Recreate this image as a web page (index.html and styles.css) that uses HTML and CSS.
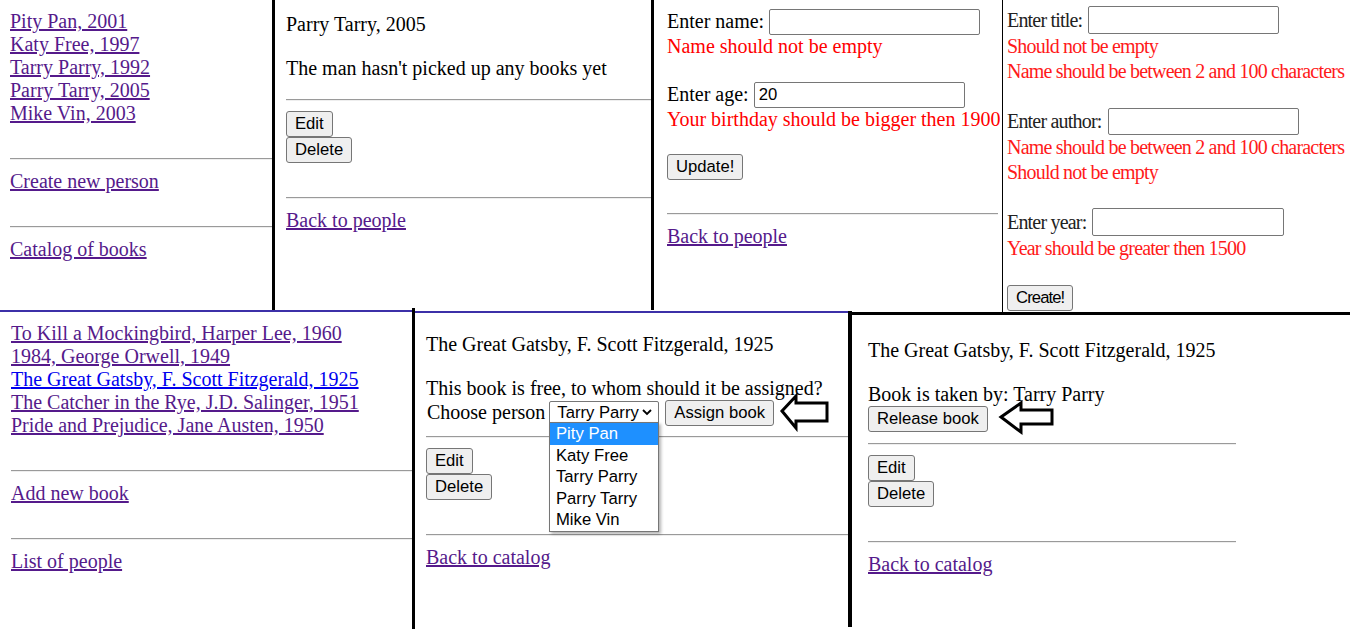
FILE: index.html
```html
<!DOCTYPE html>
<html>
<head>
<meta charset="utf-8">
<link rel="stylesheet" href="styles.css">
</head>
<body>
<div class="canvas">

  <section class="panel p1">
    <div class="list">
      <a href="#" class="v">Pity Pan, 2001</a>
      <a href="#" class="v">Katy Free, 1997</a>
      <a href="#" class="v">Tarry Parry, 1992</a>
      <a href="#" class="v">Parry Tarry, 2005</a>
      <a href="#" class="v">Mike Vin, 2003</a>
    </div>
    <div class="blank"></div>
    <hr class="rule">
    <a href="#" class="v">Create new person</a>
    <div class="blank"></div>
    <hr class="rule">
    <a href="#" class="v">Catalog of books</a>
  </section>

  <section class="panel p2">
    <p class="para">Parry Tarry, 2005</p>
    <p class="para last">The man hasn't picked up any books yet</p>
    <hr class="rule r-top19">
    <div class="actions">
      <button class="btn">Edit</button>
      <button class="btn">Delete</button>
    </div>
    <hr class="rule r-top34">
    <a href="#" class="v">Back to people</a>
  </section>

  <section class="panel p3">
    <div class="field"><span>Enter name:</span><input class="inp w211" type="text"></div>
    <div class="err">Name should not be empty</div>
    <div class="blank"></div>
    <div class="field"><span>Enter age:</span><input class="inp w211" type="text" value="20"></div>
    <div class="err">Your birthday should be bigger then 1900</div>
    <div class="blank"></div>
    <button class="btn">Update!</button>
    <hr class="rule r-top33 r-right3">
    <a href="#" class="v">Back to people</a>
  </section>

  <section class="panel p4">
    <div class="field f28"><span>Enter title:</span><input class="inp w191" type="text"></div>
    <div class="err">Should not be empty</div>
    <div class="err">Name should be between 2 and 100 characters</div>
    <div class="blank b24"></div>
    <div class="field f27"><span>Enter author:</span><input class="inp w191" type="text"></div>
    <div class="err">Name should be between 2 and 100 characters</div>
    <div class="err">Should not be empty</div>
    <div class="blank b23"></div>
    <div class="field f28"><span>Enter year:</span><input class="inp w192" type="text"></div>
    <div class="err">Year should be greater then 1500</div>
    <div class="blank b24"></div>
    <button class="btn narrow">Create!</button>
  </section>

  <section class="panel p5">
    <div class="list">
      <a href="#" class="v">To Kill a Mockingbird, Harper Lee, 1960</a>
      <a href="#" class="v">1984, George Orwell, 1949</a>
      <a href="#" class="u">The Great Gatsby, F. Scott Fitzgerald, 1925</a>
      <a href="#" class="v">The Catcher in the Rye, J.D. Salinger, 1951</a>
      <a href="#" class="v">Pride and Prejudice, Jane Austen, 1950</a>
    </div>
    <div class="blank"></div>
    <hr class="rule">
    <a href="#" class="v">Add new book</a>
    <div class="blank"></div>
    <hr class="rule">
    <a href="#" class="v">List of people</a>
  </section>

  <section class="panel p6">
    <p class="para">The Great Gatsby, F. Scott Fitzgerald, 1925</p>
    <div class="line">This book is free, to whom should it be assigned?</div>
    <div class="assign">
      <span>Choose person</span>
      <div class="select">Tarry Parry
        <svg class="chev" width="10" height="7" viewBox="0 0 10 7"><polyline points="1,1 5,5 9,1" fill="none" stroke="#000" stroke-width="1.8"/></svg>
      </div>
      <button class="btn">Assign book</button>
    </div>
    <hr class="rule r-top11">
    <div class="actions">
      <button class="btn">Edit</button>
      <button class="btn">Delete</button>
    </div>
    <hr class="rule r-top34">
    <a href="#" class="v">Back to catalog</a>

    <ul class="dropdown">
      <li class="sel">Pity Pan</li>
      <li>Katy Free</li>
      <li>Tarry Parry</li>
      <li>Parry Tarry</li>
      <li>Mike Vin</li>
    </ul>
    <svg class="arrow a1" width="50" height="39" viewBox="0 0 50 39"><polygon points="2,18 16,3 16,10 47,10 47,28 16,28 16,35" fill="#fff" stroke="#000" stroke-width="3" stroke-linejoin="miter"/></svg>
  </section>

  <section class="panel p7">
    <p class="para">The Great Gatsby, F. Scott Fitzgerald, 1925</p>
    <div class="line">Book is taken by: Tarry Parry</div>
    <button class="btn">Release book</button>
    <div class="narrowcol">
      <hr class="rule r-top11">
      <div class="actions">
        <button class="btn">Edit</button>
        <button class="btn">Delete</button>
      </div>
      <hr class="rule r-top34">
    </div>
    <a href="#" class="v">Back to catalog</a>
    <svg class="arrow a2" width="58" height="36" viewBox="0 0 58 36"><polygon points="3,17 23,3 23,10 54,10 54,24 23,24 23,32" fill="#fff" stroke="#000" stroke-width="3" stroke-linejoin="miter"/></svg>
  </section>

  <div class="bar v1"></div>
  <div class="bar v2"></div>
  <div class="bar v3"></div>
  <div class="bar h1"></div>
  <div class="bar h2"></div>
  <div class="bar v4"></div>
  <div class="bar v5"></div>
  <div class="bar h3"></div>
</div>
</body>
</html>
```
FILE: styles.css
```css
html, body {
  margin: 0;
  padding: 0;
  background: #fff;
}
body {
  font-family: "Liberation Serif", "Times New Roman", serif;
  font-size: 20px;
  line-height: 23px;
  color: #000;
}
.canvas {
  position: relative;
  width: 1350px;
  height: 629px;
  overflow: hidden;
}
.panel {
  position: absolute;
  box-sizing: border-box;
  overflow: hidden;
  white-space: nowrap;
}
a { display: block; width: max-content; }
a.v { color: #551a8b; }
a.u { color: #0000ee; }
.list a { line-height: 23px; }
.blank { height: 23px; }
.blank.b24 { height: 24px; }
.blank.b23 { height: 23px; }
.rule {
  border: 0;
  border-top: 1px solid #9a9a9a;
  border-bottom: 1px solid #eeeeee;
  height: 0;
  margin: 10px 0;
}
.r-top19 { margin-top: 19px; }
.r-top33 { margin-top: 33px; }
.r-top34 { margin-top: 34px; }
.r-top11 { margin-top: 11px; }
.r-right3 { margin-right: 3px; }
.para { margin: 0 0 21px 0; }
.para.last { margin-bottom: 0; }
.line { height: 23px; }

.btn {
  display: block;
  box-sizing: border-box;
  height: 26px;
  padding: 0 8px;
  font-family: "Liberation Sans", Arial, sans-serif;
  font-size: 16.67px;
  line-height: 24px;
  color: #000;
  background: #efefef;
  border: 1px solid #767676;
  border-radius: 3px;
  width: max-content;
}
.actions {
  display: flex;
  flex-direction: column;
  align-items: flex-start;
}

.inp {
  box-sizing: border-box;
  height: 26px;
  margin-left: 5px;
  padding: 1px 4px;
  font-family: "Liberation Sans", Arial, sans-serif;
  font-size: 16.67px;
  color: #000;
  background: #fff;
  border: 1px solid #767676;
  border-radius: 2px;
}
.w211 { width: 211px; }
.w191 { width: 191px; }
.w192 { width: 192px; }
.field {
  display: flex;
  align-items: center;
  height: 27px;
}
.field.f28 { height: 28px; }
.field.f28 .inp { height: 28px; }
.field.f27 .inp { height: 27px; }
.err { color: #ff0000; }

/* panels */
.p1 { left: 0; top: 0; width: 272px; height: 310px; padding: 10px 0 0 10px; }
.p2 { left: 275px; top: 0; width: 376px; height: 310px; padding: 13px 0 0 11px; }
.p3 { left: 654px; top: 0; width: 347px; height: 310px; padding: 8px 0 0 13px; }
.p4 {
  left: 1003px; top: 0; width: 347px; height: 312px;
  padding: 6px 0 0 4px;
  line-height: 25px;
  letter-spacing: -0.8px;
  color: #222;
}
.p4 .inp { margin-left: 6px; }
.p4 .err { color: #ff1a1a; }
.btn.narrow { letter-spacing: -0.9px; }
.p5 { left: 0; top: 312px; width: 412px; height: 317px; padding: 10px 0 0 11px; }
.p6 { left: 415px; top: 313px; width: 433px; height: 316px; padding: 20px 0 0 11px; }
.p7 { left: 852px; top: 315px; width: 498px; height: 314px; padding: 24px 0 0 16px; }
.narrowcol { width: 368px; }

.assign {
  display: flex;
  align-items: center;
  height: 25px;
}
.assign > span { padding-left: 1px; }
.select {
  position: relative;
  box-sizing: border-box;
  width: 110px;
  height: 23px;
  margin-left: 4px;
  padding-left: 7px;
  font-family: "Liberation Sans", Arial, sans-serif;
  font-size: 16.67px;
  line-height: 21px;
  border: 1px solid #767676;
  border-radius: 2px;
  background: #fff;
}
.chev {
  position: absolute;
  right: 6px;
  top: 7px;
}
.assign .btn { margin-left: 6px; }

.dropdown {
  position: absolute;
  left: 134px;
  top: 109px;
  width: 110px;
  margin: 0;
  padding: 0;
  list-style: none;
  box-sizing: border-box;
  background: #fff;
  border: 1px solid #767676;
  box-shadow: 2px 2px 3px rgba(0,0,0,0.3);
  font-family: "Liberation Sans", Arial, sans-serif;
  font-size: 16.67px;
}
.dropdown li {
  height: 21.5px;
  line-height: 21.5px;
  padding-left: 6px;
}
.dropdown li.sel { background: #1e90ff; color: #fff; }

.arrow { position: absolute; }
.a1 { left: 365px; top: 80px; }
.a2 { left: 146px; top: 85px; }

/* collage separators */
.bar { position: absolute; background: #000; }
.v1 { left: 272px; top: 0; width: 3px; height: 310px; }
.v2 { left: 651px; top: 0; width: 3px; height: 310px; }
.v3 { left: 1002px; top: 0; width: 1px; height: 312px; }
.h1 { left: 0; top: 310px; width: 412px; height: 2px; background: #3c30a8; }
.h2 { left: 415px; top: 311px; width: 433px; height: 2px; background: #3c30a8; }
.v4 { left: 412px; top: 308px; width: 3px; height: 321px; }
.v5 { left: 848px; top: 311px; width: 4px; height: 316px; }
.h3 { left: 848px; top: 312px; width: 502px; height: 3px; }
```
